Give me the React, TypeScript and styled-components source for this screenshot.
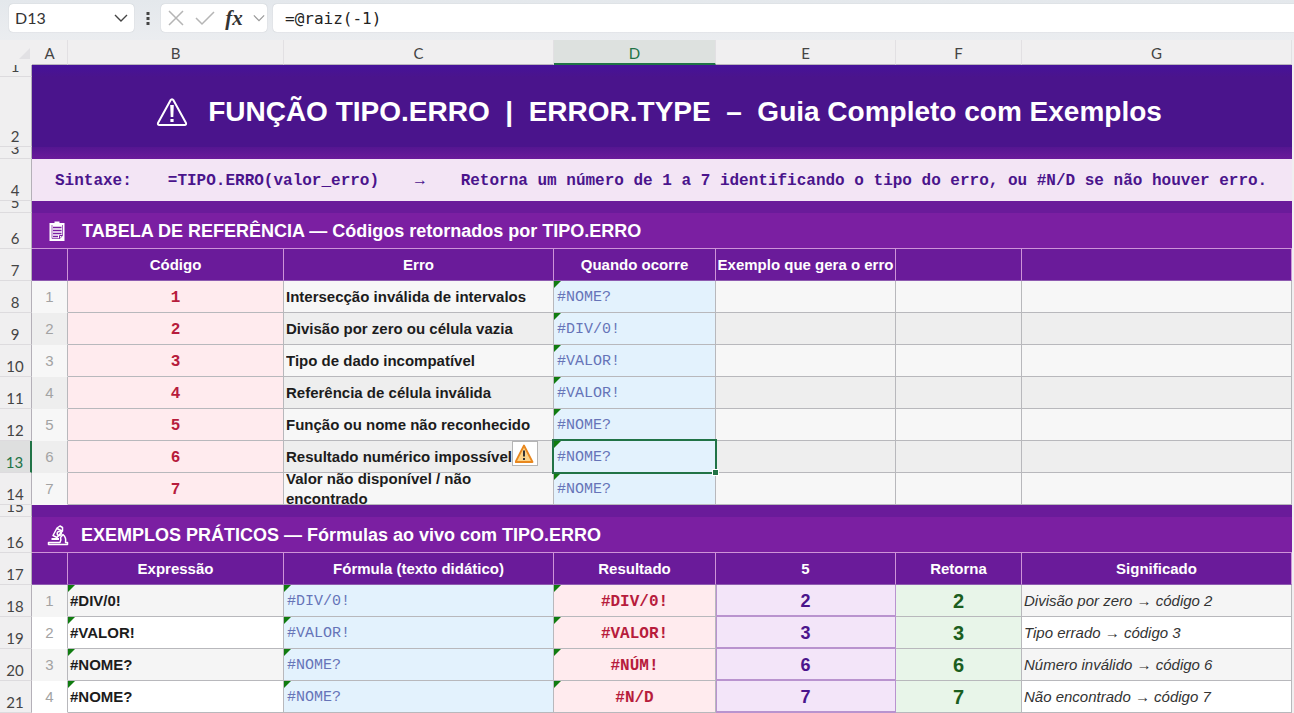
import React from "react";
import styled, { createGlobalStyle, css } from "styled-components";

const sans = '"Liberation Sans", Arial, sans-serif';
const mono = '"Liberation Mono", "Courier New", monospace';
const ui = 'Lato, "Segoe UI", sans-serif';

const Global = createGlobalStyle`
  *, *::before, *::after { box-sizing: border-box; }
  body { margin: 0; background: #f0eff0; font-family: ${sans}; overflow: hidden; }
`;

const FormulaBar = styled.header`
  display: flex;
  align-items: flex-start;
  height: 40px;
  padding: 4px 0 0 9px;
  background: linear-gradient(#e4e8ec, #ebedf0);
`;

const NameBox = styled.div`
  display: flex;
  align-items: center;
  width: 125px;
  height: 28px;
  padding: 0 6px;
  background: #fff;
  border-radius: 4px;
  box-shadow: 0 0 1px #a9aeb5;
`;

const NameInput = styled.input`
  flex: 1;
  min-width: 0;
  padding: 0;
  border: 0;
  outline: 0;
  background: none;
  color: #333;
  font: 16px/24px ${ui};
`;

const IconButton = styled.button<{ $color?: string }>`
  display: flex;
  align-items: center;
  justify-content: center;
  padding: 0;
  border: 0;
  background: none;
  color: ${(p) => p.$color || "#444"};
`;

const Grip = styled.div`
  display: flex;
  align-items: center;
  justify-content: center;
  width: 27px;
  height: 28px;
`;

const Actions = styled.div`
  display: flex;
  align-items: center;
  justify-content: space-between;
  width: 106px;
  height: 28px;
  margin-right: 6px;
  padding: 0 2px 0 6px;
  background: #fff;
  border-radius: 4px;
  box-shadow: 0 0 1px #a9aeb5;
`;

const FxLabel = styled.span`
  color: #333;
  font: italic bold 21px/24px "Liberation Serif", serif;
`;

const FormulaInput = styled.input`
  flex: 1;
  min-width: 0;
  height: 28px;
  padding: 0 12px;
  border: 0;
  outline: 0;
  border-radius: 4px 0 0 4px;
  background: #fff;
  box-shadow: 0 0 1px #a9aeb5;
  color: #222;
  font: 16px/24px "DejaVu Sans Mono", monospace;
`;

const Sheet = styled.main`
  padding-right: 2px;
`;

const Grid = styled.table`
  width: 100%;
  min-width: 1200px;
  table-layout: fixed;
  border-collapse: separate;
  border-spacing: 0;
`;

const Col = styled.col<{ $w?: number }>`
  width: ${(p) => (p.$w ? p.$w + "px" : "auto")};
`;

const ColHead = styled.th<{ $on?: boolean }>`
  height: 25px;
  padding: 2px 0 0;
  border-right: 1px solid #e2e0e3;
  border-bottom: ${(p) => (p.$on ? "2px solid #217346" : "1px solid #b9b5bd")};
  background: ${(p) => (p.$on ? "#dde1df" : "#f0eff0")};
  color: ${(p) => (p.$on ? "#217346" : "#444")};
  font: 15px/20px ${ui};
`;

const Corner = styled(ColHead)`
  border-color: #f0eff0;
`;

const CornerMark = styled.svg`
  display: block;
  margin-left: 19px;
`;

const Row = styled.tr<{ $h: number }>`
  height: ${(p) => p.$h}px;
`;

const RowHead = styled.th<{ $on?: boolean }>`
  padding: 0;
  border-right: ${(p) => (p.$on ? "2px solid #217346" : "1px solid #b4b0b8")};
  border-bottom: 1px solid #dddbde;
  background: ${(p) => (p.$on ? "#dedfdf" : "#f0eff0")};
  color: ${(p) => (p.$on ? "#217346" : "#444")};
  font: 15px/20px ${ui};
  vertical-align: bottom;
`;

const RowNumber = styled.div<{ $h: number }>`
  display: flex;
  align-items: flex-end;
  justify-content: center;
  height: ${(p) => Math.min(p.$h, 21) - 1}px;
  padding-right: 1px;
  overflow: hidden;
`;

const Banner = styled.td<{ $bg: string; $line?: boolean }>`
  padding: 0;
  border-bottom: ${(p) => (p.$line ? "1px solid #ce93d8" : "0")};
  background: ${(p) => p.$bg};
`;

const Title = styled.h1`
  display: flex;
  align-items: center;
  justify-content: center;
  gap: 20px;
  margin: 0;
  padding-right: 6px;
  color: #fff;
  font: bold 28px/32px ${sans};
  white-space: pre;
`;

const Syntax = styled.p`
  display: flex;
  gap: 36px;
  margin: 0;
  padding: 2px 0 0 23px;
  overflow: hidden;
  color: #4a148c;
  font: bold 16px/20px ${mono};
  white-space: nowrap;
`;

const SectionTitle = styled.h2`
  display: flex;
  align-items: center;
  gap: 12px;
  margin: 0;
  padding-left: 14px;
  color: #fff;
  font: bold 18px/24px ${sans};
`;

const HeadCell = styled.th`
  padding: 0;
  border-right: 1px solid #ce93d8;
  border-bottom: 1px solid #8e5bb0;
  background: #6a1b9a;
  color: #fff;
  font: bold 15px/20px ${sans};
  white-space: nowrap;
`;

type Kind = "index" | "code" | "name" | "formula" | "blank" | "key" | "value" | "note";

const kinds = {
  index: css`color: #a3a3a3; font: 15px/20px ${sans}; text-align: center; border-bottom-color: transparent;`,
  code: css`background: #ffebee; color: #b71c3c; font: bold 16px/20px ${mono}; text-align: center; padding-top: 2px;`,
  name: css`color: #1c1c1c; font: bold 15px/20px ${sans};`,
  formula: css`background: #e3f2fd; color: #6674b8; font: 15px/20px ${mono}; padding: 2px 3px 0;`,
  blank: css``,
  key: css`background: #f3e5f9; color: #4a148c; font: bold 18px/20px ${sans}; text-align: center; border-color: #b993cf; border-bottom-width: 2px; box-shadow: inset 1px 0 #b993cf; padding-top: 2px;`,
  value: css`background: #e8f5e9; color: #1b5e20; font: bold 20px/20px ${sans}; text-align: center;`,
  note: css`color: #333; font: italic 15px/20px ${sans};`,
};

const Cell = styled.td<{ $kind: Kind; $bg: string }>`
  position: relative;
  padding: 0 2px;
  border-right: 1px solid #b8b8bc;
  border-bottom: 1px solid #b8b8bc;
  background: ${(p) => p.$bg};
  ${(p) => kinds[p.$kind]}
`;

const Clip = styled.div`
  display: flex;
  align-items: center;
  height: 31px;
  overflow: hidden;
`;

const Flag = styled.span`
  position: absolute;
  top: 0;
  left: 0;
  border-top: 7px solid #107c10;
  border-right: 7px solid transparent;
`;

const Selection = styled.div`
  position: absolute;
  z-index: 1;
  inset: -2px;
  border: 2px solid #217346;
  pointer-events: none;
`;

const FillHandle = styled.span`
  position: absolute;
  right: -4px;
  bottom: -4px;
  width: 7px;
  height: 7px;
  border: 1px solid #fff;
  background: #217346;
`;

const ErrorButton = styled.button`
  position: absolute;
  z-index: 2;
  top: 0;
  right: calc(100% + 16px);
  display: flex;
  align-items: center;
  justify-content: center;
  width: 26px;
  height: 25px;
  padding: 0;
  border: 1px solid #b5b5b5;
  background: #fff;
`;

const Chevron = ({ w }: { w: number }) => (
  <svg width={w} height="8" viewBox="0 0 14 8" fill="none" stroke="currentColor" strokeWidth="1.4" aria-hidden="true">
    <path d="M1 1l6 6 6-6" />
  </svg>
);

const WarningIcon = () => (
  <svg width="32" height="30" viewBox="0 0 32 30" fill="none" stroke="#fff" strokeWidth="2" strokeLinejoin="round" aria-hidden="true">
    <path d="M14.4 3.4Q16 1 17.600 3.400L30 26Q30.600 28 28.600 28H3.400Q1.400 28 2 26Z" />
    <path d="M14.2 8h3.600l-0.500 12h-2.600zM14.400 22h3.200v3h-3.200z" fill="#fff" stroke="none" />
  </svg>
);

const ClipboardIcon = () => (
  <svg width="24" height="22" viewBox="0 0 24 22" aria-hidden="true">
    <path d="M3.500 3h5V1.500h5V3h5v18h-15z" fill="#fff" />
    <path d="M6 5v13.500h8l2.500-3V5" fill="none" stroke="#7b1fa2" strokeWidth="0.700" />
    <path d="M7 7.500h8.500M7 10.500h8.500M7 13.500h8.500M7 16.500h5" stroke="#7b1fa2" strokeWidth="1.300" />
    <path d="M13.500 18.500v-3h3" fill="none" stroke="#7b1fa2" />
  </svg>
);

const MicroscopeIcon = () => (
  <svg width="23" height="22" viewBox="0 0 23 22" fill="none" stroke="#fff" strokeWidth="1.500" strokeLinejoin="round" aria-hidden="true">
    <path d="M2.500 20.500V18.500H14q1.500-3 0.500-5l2.500-3q3.500 3 2.500 8h2v2z" />
    <path d="M7 11.500L11 4l3-2 2.500 1.500v3.500L11 13.500z" />
    <path d="M11 4.500l5 2.500M5.500 15h7.500" strokeWidth="1.800" />
    <circle cx="13.200" cy="9.500" r="2" />
  </svg>
);

const AlertIcon = () => (
  <svg width="20" height="20" viewBox="0 0 20 20" aria-hidden="true">
    <path d="M9 1.500L17.500 18h-17z" fill="#fcd48a" stroke="#e8871e" strokeWidth="1.800" strokeLinejoin="round" />
    <path d="M9 6.500v6M9 14v2" stroke="#333" strokeWidth="2" />
  </svg>
);

const columns = ["A", "B", "C", "D", "E", "F", "G"];
const widths = [32, 36, 216, 270, 162, 180, 126];

const reference = [
  ["Intersecção inválida de intervalos", "#NOME?"],
  ["Divisão por zero ou célula vazia", "#DIV/0!"],
  ["Tipo de dado incompatível", "#VALOR!"],
  ["Referência de célula inválida", "#VALOR!"],
  ["Função ou nome não reconhecido", "#NOME?"],
  ["Resultado numérico impossível", "#NOME?"],
  ["Valor não disponível / não encontrado", "#NOME?"],
];

const examples = [
  ["#DIV/0!", "#DIV/0!", "#DIV/0!", "2", "Divisão por zero → código 2"],
  ["#VALOR!", "#VALOR!", "#VALOR!", "3", "Tipo errado → código 3"],
  ["#NOME?", "#NOME?", "#NÚM!", "6", "Número inválido → código 6"],
  ["#NOME?", "#NOME?", "#N/D", "7", "Não encontrado → código 7"],
];

const SheetRow = ({ n, h, on, children }: { n: number; h: number; on?: boolean; children: React.ReactNode }) => (
  <Row $h={h}>
    <RowHead scope="row" $on={on}>
      <RowNumber $h={h}>{n}</RowNumber>
    </RowHead>
    {children}
  </Row>
);

const Band = ({ n, h, bg, line, children }: { n: number; h: number; bg: string; line?: boolean; children?: React.ReactNode }) => (
  <SheetRow n={n} h={h}>
    <Banner colSpan={7} $bg={bg} $line={line}>{children}</Banner>
  </SheetRow>
);

const HeaderRow = ({ n, labels }: { n: number; labels: string[] }) => (
  <SheetRow n={n} h={32}>
    {labels.map((label, i) => (
      <HeadCell key={i} scope="col">{label}</HeadCell>
    ))}
  </SheetRow>
);

export default function App() {
  return (
    <>
      <Global />
      <FormulaBar>
        <NameBox>
          <NameInput aria-label="Caixa de nome" defaultValue="D13" />
          <IconButton type="button" aria-label="Abrir lista de nomes"><Chevron w={14} /></IconButton>
        </NameBox>
        <Grip>
          <svg width="4" height="14" viewBox="0 0 4 14" fill="#444" aria-hidden="true">
            <path d="M0.500 1h3v3h-3zM0.500 6h3v3h-3zM0.500 11h3v3h-3z" />
          </svg>
        </Grip>
        <Actions>
          <IconButton type="button" aria-label="Cancelar" $color="#b5b5b5">
            <svg width="18" height="18" viewBox="0 0 18 18" stroke="currentColor" strokeWidth="1.500"><path d="M2 2l14 14M16 2L2 16" /></svg>
          </IconButton>
          <IconButton type="button" aria-label="Inserir" $color="#b5b5b5">
            <svg width="20" height="16" viewBox="0 0 20 16" fill="none" stroke="currentColor" strokeWidth="1.500"><path d="M1 8l6 6L19 2" /></svg>
          </IconButton>
          <IconButton type="button" aria-label="Inserir função"><FxLabel>fx</FxLabel></IconButton>
          <IconButton type="button" aria-label="Mais funções" $color="#999"><Chevron w={12} /></IconButton>
        </Actions>
        <FormulaInput aria-label="Barra de fórmulas" defaultValue="=@raiz(-1)" />
      </FormulaBar>
      <Sheet>
        <Grid>
          <colgroup>
            {widths.map((w, i) => <Col key={i} $w={w} />)}
            <Col />
          </colgroup>
          <thead>
            <tr>
              <Corner>
                <CornerMark width="11" height="11" viewBox="0 0 11 11" aria-hidden="true"><path d="M11 0v11H0z" fill="#e2e1e4" /></CornerMark>
              </Corner>
              {columns.map((c) => <ColHead key={c} scope="col" $on={c === "D"}>{c}</ColHead>)}
            </tr>
          </thead>
          <tbody>
            <Band n={1} h={12} bg="linear-gradient(#46129a, #4a148c)" />
            <Band n={2} h={70} bg="#4a148c">
              <Title><WarningIcon />{"FUNÇÃO TIPO.ERRO  |  ERROR.TYPE  –  Guia Completo com Exemplos"}</Title>
            </Band>
            <Band n={3} h={12} bg="linear-gradient(#551691, #6a1b9a)" />
            <Band n={4} h={42} bg="#f3e5f5">
              <Syntax>
                <span>Sintaxe:</span>
                <span>=TIPO.ERRO(valor_erro)</span>
                <span>→</span>
                <span>Retorna um número de 1 a 7 identificando o tipo do erro, ou #N/D se não houver erro.</span>
              </Syntax>
            </Band>
            <Band n={5} h={12} bg="#6a1b9a" />
            <Band n={6} h={36} bg="#7b1fa2" line>
              <SectionTitle><ClipboardIcon />TABELA DE REFERÊNCIA — Códigos retornados por TIPO.ERRO</SectionTitle>
            </Band>
            <HeaderRow n={7} labels={["", "Código", "Erro", "Quando ocorre", "Exemplo que gera o erro", "", ""]} />
            {reference.map(([name, formula], i) => {
              const bg = i % 2 ? "#eeeeee" : "#f7f7f7";
              const on = i === 5;
              return (
                <SheetRow key={i} n={8 + i} h={32} on={on}>
                  <Cell $kind="index" $bg={bg}>{i + 1}</Cell>
                  <Cell $kind="code" $bg={bg}>{i + 1}</Cell>
                  <Cell $kind="name" $bg={bg}><Clip>{name}</Clip></Cell>
                  <Cell $kind="formula" $bg={bg}>
                    <Flag />
                    {formula}
                    {on && <Selection><FillHandle /></Selection>}
                    {on && <ErrorButton type="button" aria-label="Opções de erro"><AlertIcon /></ErrorButton>}
                  </Cell>
                  <Cell $kind="blank" $bg={bg} />
                  <Cell $kind="blank" $bg={bg} />
                  <Cell $kind="blank" $bg={bg} />
                </SheetRow>
              );
            })}
            <Band n={15} h={12} bg="#6a1b9a" />
            <Band n={16} h={36} bg="#7b1fa2" line>
              <SectionTitle><MicroscopeIcon />EXEMPLOS PRÁTICOS — Fórmulas ao vivo com TIPO.ERRO</SectionTitle>
            </Band>
            <HeaderRow n={17} labels={["", "Expressão", "Fórmula (texto didático)", "Resultado", "5", "Retorna", "Significado"]} />
            {examples.map(([expr, formula, result, code, note], i) => {
              const bg = i % 2 ? "#ffffff" : "#f5f5f5";
              return (
                <SheetRow key={i} n={18 + i} h={32}>
                  <Cell $kind="index" $bg={bg}>{i + 1}</Cell>
                  <Cell $kind="name" $bg={bg}><Flag />{expr}</Cell>
                  <Cell $kind="formula" $bg={bg}><Flag />{formula}</Cell>
                  <Cell $kind="code" $bg={bg}><Flag />{result}</Cell>
                  <Cell $kind="key" $bg={bg}>{code}</Cell>
                  <Cell $kind="value" $bg={bg}>{code}</Cell>
                  <Cell $kind="note" $bg={bg}>{note}</Cell>
                </SheetRow>
              );
            })}
          </tbody>
        </Grid>
      </Sheet>
    </>
  );
}
